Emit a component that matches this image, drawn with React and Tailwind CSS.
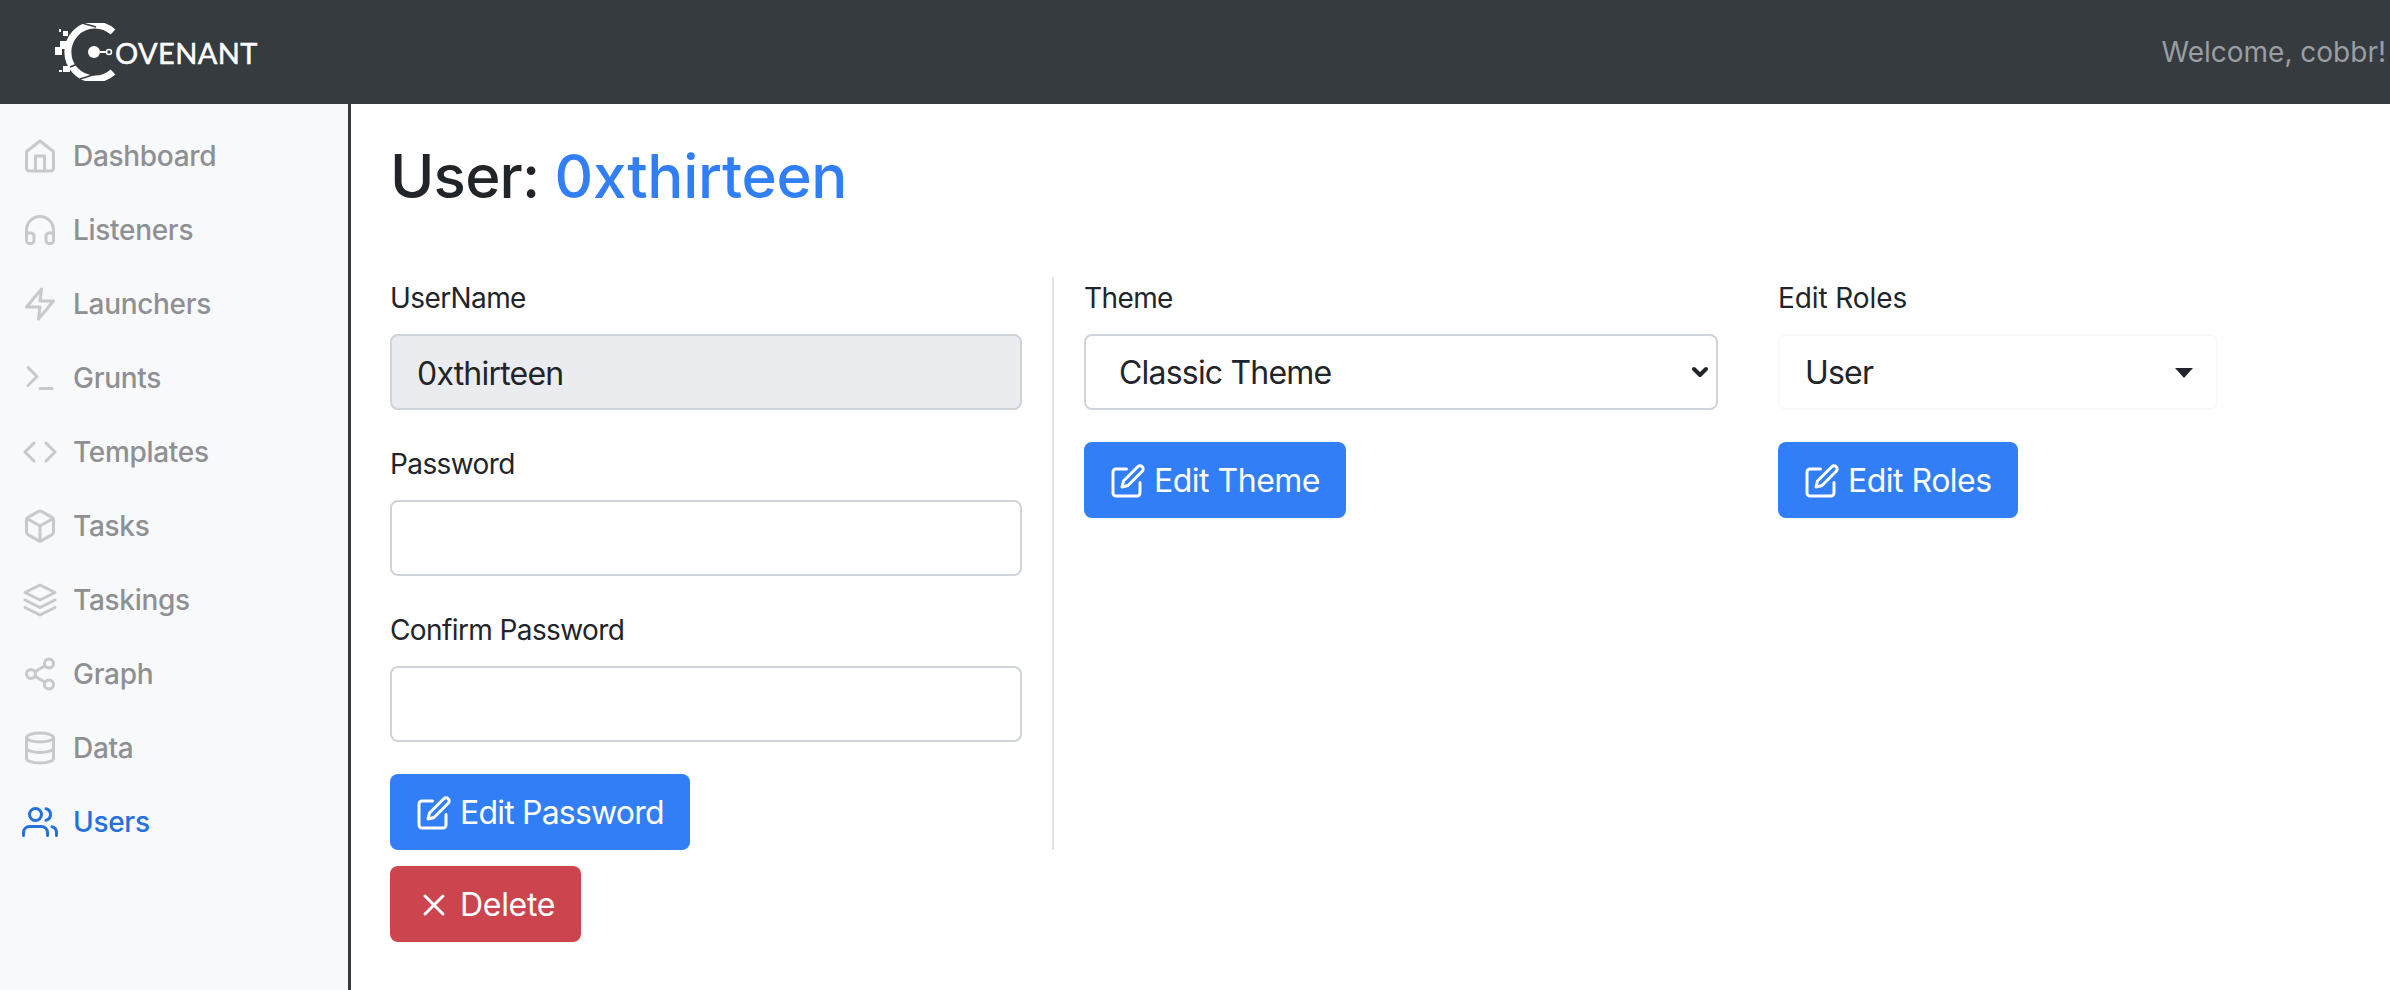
import React from 'react';
import { FiHome, FiHeadphones, FiZap, FiTerminal, FiCode, FiBox, FiLayers, FiShare2, FiDatabase, FiUsers, FiEdit, FiX, FiChevronDown } from 'react-icons/fi';

const navItems = [
  { label: 'Dashboard', icon: FiHome },
  { label: 'Listeners', icon: FiHeadphones },
  { label: 'Launchers', icon: FiZap },
  { label: 'Grunts', icon: FiTerminal },
  { label: 'Templates', icon: FiCode },
  { label: 'Tasks', icon: FiBox },
  { label: 'Taskings', icon: FiLayers },
  { label: 'Graph', icon: FiShare2 },
  { label: 'Data', icon: FiDatabase },
  { label: 'Users', icon: FiUsers, active: true },
];

function Logo() {
  return (
    <div className="flex items-center">
      <svg width="62" height="58" viewBox="0 0 62 58" className="text-white">
        <path d="M59 9 A27 27 0 1 0 59 49" fill="none" stroke="currentColor" strokeWidth="7" />
        <path d="M28 0 l14 4 M16 44 l10 -4 M26 56 l16 -5" stroke="#363b3f" strokeWidth="1.5" />
        <rect x="6" y="18" width="9" height="8" fill="currentColor" />
        <rect x="1" y="24" width="7" height="8" fill="currentColor" />
        <rect x="9" y="8" width="5" height="5" fill="currentColor" />
        <rect x="5" y="6" width="2" height="3" fill="currentColor" />
        <rect x="9" y="43" width="7" height="6" fill="currentColor" />
        <rect x="5" y="47" width="3" height="2" fill="currentColor" />
        <circle cx="40" cy="29" r="6" fill="currentColor" />
        <path d="M46 29 h7" stroke="currentColor" strokeWidth="2" />
        <circle cx="55" cy="29" r="2.5" fill="none" stroke="currentColor" strokeWidth="1.5" />
      </svg>
      <span className="text-white text-[29px] leading-none tracking-[0.4px] font-[Lato,sans-serif] [-webkit-text-stroke:0.5px_white] ml-[-1px]">OVENANT</span>
    </div>
  );
}

function NavItem({ label, icon: Icon, active }) {
  return (
    <a className={`flex items-center h-[74px] pl-[22px] text-[28px] font-medium tracking-[-0.3px] ${active ? 'text-[#2470dc]' : 'text-[#8e9094]'}`}>
      <span className="w-[36px] shrink-0">
        <Icon size={36} className={active ? 'text-[#2470dc]' : 'text-[#c8c9cb]'} />
      </span>
      <span className="ml-[15px]">{label}</span>
    </a>
  );
}

function Label({ children, wide }) {
  return <label className={`block text-[28px] leading-[42px] text-[#212529] mb-[15px] ${wide ? 'tracking-[-0.1px]' : 'tracking-[-0.6px]'}`}>{children}</label>;
}

function BlueButton({ children, tight }) {
  return (
    <button className={`inline-flex items-center h-[76px] pt-[2px] px-[26px] rounded-[8px] bg-[#317ef7] text-white text-[32px] ${tight ? 'tracking-[-0.8px]' : 'tracking-[-0.5px]'}`}>
      <FiEdit size={36} className="mr-2" />
      {children}
    </button>
  );
}

function TextField({ value, disabled }) {
  return (
    <input
      readOnly
      value={value}
      disabled={disabled}
      className={`block w-full h-[76px] px-[25px] pt-[2px] text-[32px] tracking-[-0.8px] text-[#212529] border-2 border-[#ced4da] rounded-[8px] ${disabled ? 'bg-[#eaecf0]' : 'bg-white'}`}
    />
  );
}

export default function App() {
  return (
    <div className="h-[990px] flex flex-col bg-white overflow-hidden font-[Inter,sans-serif]">
      <header className="h-[104px] shrink-0 bg-[#363b3f] flex items-center justify-between pl-[54px]">
        <Logo />
        <span className="text-[28px] text-[#999ea3] mr-[4px]">Welcome, cobbr!</span>
      </header>

      <div className="flex flex-1 min-h-0">
        <aside className="w-[351px] shrink-0 bg-[#f8f9fb] border-r-[3px] border-[#363b3f] pt-[15px]">
          {navItems.map((item) => (
            <NavItem key={item.label} {...item} />
          ))}
        </aside>

        <main className="flex-1 pl-[39px]">
          <h1 className="mt-[36px] text-[60px] leading-[72px] font-medium tracking-[-0.8px] text-[#212529]">
            User: <span className="tracking-[-0.3px] text-[#317ef7]">0xthirteen</span>
          </h1>

          <div className="flex mt-[65px]">
            <div className="w-[664px] pr-[30px] border-r-2 border-[#dee2e6]">
              <Label>UserName</Label>
              <TextField value="0xthirteen" disabled />
              <div className="mt-[33px]">
                <Label>Password</Label>
                <TextField value="" />
              </div>
              <div className="mt-[33px]">
                <Label>Confirm Password</Label>
                <TextField value="" />
              </div>
              <div className="mt-[32px]">
                <BlueButton tight>Edit Password</BlueButton>
              </div>
            </div>

            <div className="w-[634px] ml-[30px] shrink-0">
              <Label>Theme</Label>
              <div className="relative">
                <select className="block w-full h-[76px] pl-[33px] pt-[2px] text-[32px] tracking-[-0.8px] text-[#212529] bg-white border-2 border-[#ced4da] rounded-[8px] appearance-none">
                  <option>Classic Theme</option>
                </select>
                <FiChevronDown size={24} strokeWidth={4} className="absolute right-[6px] top-[26px] text-[#212529]" />
              </div>
              <div className="mt-[32px]">
                <BlueButton>Edit Theme</BlueButton>
              </div>
            </div>

            <div className="w-[440px] ml-[60px] shrink-0">
              <Label wide>Edit Roles</Label>
              <div className="flex items-center justify-between h-[76px] pl-[25px] pr-[23px] pt-[2px] text-[32px] tracking-[-0.8px] text-[#212529] border-2 border-[#f8f9fa] rounded-[8px]">
                User
                <span className="border-x-[9px] border-x-transparent border-t-[10px] border-t-[#212529]" />
              </div>
              <div className="mt-[32px]">
                <BlueButton>Edit Roles</BlueButton>
              </div>
            </div>
          </div>

          <button className="mt-[16px] inline-flex items-center h-[76px] pt-[2px] px-[26px] rounded-[8px] bg-[#cc444d] text-white text-[32px] tracking-[-0.3px]">
            <FiX size={36} className="mr-2" />
            Delete
          </button>
        </main>
      </div>
    </div>
  );
}
